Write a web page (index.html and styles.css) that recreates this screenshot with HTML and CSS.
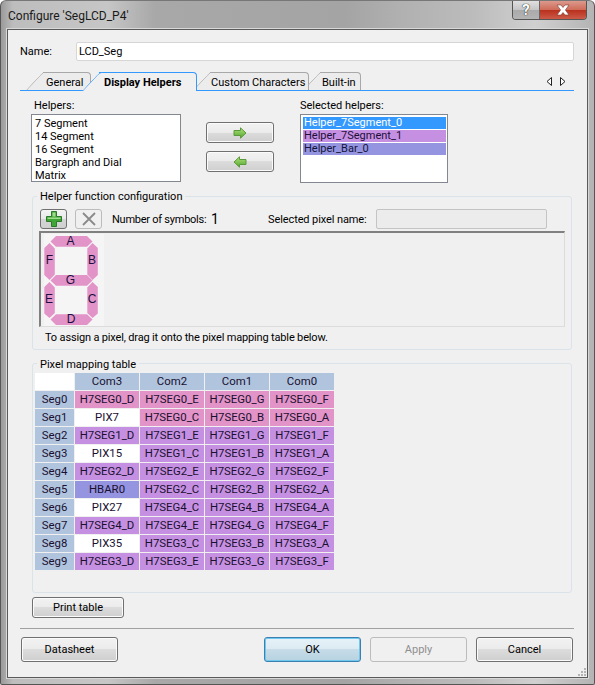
FILE: index.html
```html
<!DOCTYPE html>
<html>
<head>
<meta charset="UTF-8" />
<title>Configure 'SegLCD_P4'</title>
<link rel="stylesheet" href="styles.css">
</head>
<body>
<div class="window">
	<div class="titlebar">
		<span class="title">Configure 'SegLCD_P4'</span>
		<div class="caption">
			<div class="cap-help">?</div>
			<div class="cap-close">
				<svg width="18" height="12" viewBox="0 0 18 12"><path d="M3 1h4l2 2.5L11 1h4l-3.6 5L15 11h-4L9 8.5 7 11H3l3.6-5z" fill="#fff" stroke="#7a3a30" stroke-width=".6"/></svg>
			</div>
		</div>
	</div>
	<div class="panel">
		<div class="name-row">
			<label class="name-label">Name:</label>
			<div class="name-input">LCD_Seg</div>
		</div>

		<div class="tabs">
			<div class="tab tab-general">General</div>
			<div class="tab tab-active">Display Helpers</div>
			<div class="tab tab-custom">Custom Characters</div>
			<div class="tab tab-builtin">Built-in</div>
			<div class="tab-nav">
				<svg width="20" height="9" viewBox="0 0 20 9"><path d="M5.500 .5v8L1 4.500z M14.500 .5v8L19 4.500z" fill="#fff" stroke="#222"/></svg>
			</div>
		</div>

		<div class="helpers">
			<div class="helpers-col">
				<div class="list-label">Helpers:</div>
				<div class="listbox list-left">
					<div class="item">7 Segment</div>
					<div class="item">14 Segment</div>
					<div class="item">16 Segment</div>
					<div class="item">Bargraph and Dial</div>
					<div class="item">Matrix</div>
				</div>
			</div>
			<div class="move-btns">
				<div class="btn btn-move">
					<svg width="14" height="12" viewBox="0 0 14 12"><defs><linearGradient id="arrow" x1="0" y1="0" x2="0" y2="1"><stop offset="0" stop-color="#b4e27a"/><stop offset="1" stop-color="#4fa52f"/></linearGradient></defs><path d="M1 3.500h6.500V.8L13 6l-5.500 5.200V8.500H1z" fill="url(#arrow)" stroke="#5a9a3a"/></svg>
				</div>
				<div class="btn btn-move">
					<svg width="14" height="12" viewBox="0 0 14 12"><path d="M13 3.500H6.500V.8L1 6l5.500 5.200V8.500H13z" fill="url(#arrow)" stroke="#5a9a3a"/></svg>
				</div>
			</div>
			<div class="helpers-col">
				<div class="list-label">Selected helpers:</div>
				<div class="listbox list-right">
					<div class="sel sel-blue">Helper_7Segment_0</div>
					<div class="sel sel-purple">Helper_7Segment_1</div>
					<div class="sel sel-violet">Helper_Bar_0</div>
				</div>
			</div>
		</div>

		<fieldset class="group group-config">
			<legend>Helper function configuration</legend>
			<div class="toolbar">
				<div class="tool tool-add">
					<svg width="18" height="18" viewBox="0 0 18 18"><path d="M6.500 1.500h5v5h5v5h-5v5h-5v-5h-5v-5h5z" fill="#3fa535" stroke="#2b7a2b"/><path d="M7.500 2.500h3v4h-3z M2.500 7.500h13v1.500h-13z" fill="#9fdc8c"/></svg>
				</div>
				<div class="tool tool-del">
					<svg width="14" height="14" viewBox="0 0 14 14"><path d="M1 1l12 12M13 1L1 13" stroke="#8a8a8a" stroke-width="1.800" fill="none"/></svg>
				</div>
				<span class="sym-label">Number of symbols:</span>
				<span class="sym-count">1</span>
				<span class="pix-label">Selected pixel name:</span>
				<div class="pix-input"></div>
			</div>
			<div class="canvas">
				<svg class="seg" width="60" height="92" viewBox="44 234 60 92">
					<rect x="44" y="234" width="60" height="92" fill="#f5f5f5"/>
					<g fill="#e293c7">
						<polygon points="50.500,241.500 56,236 87,236 92.500,241.500 87,246.800 56,246.800"/>
						<polygon points="49.500,243 54.800,248.500 54.800,274.500 49.500,280 44.300,275 44.300,248"/>
						<polygon points="92.500,243 97.800,248 97.800,275 92.500,280 87.300,274.500 87.300,248.500"/>
						<polygon points="50.500,280.500 56,275 87,275 92.500,280.500 87,285.800 56,285.800"/>
						<polygon points="49.500,282 54.800,287.500 54.800,313 49.500,318 44.300,313.500 44.300,287"/>
						<polygon points="92.500,282 97.800,287 97.800,313.500 92.500,318 87.300,313 87.300,287.500"/>
						<polygon points="50.500,319.500 56,314.200 87,314.200 92.500,319.500 87,325 56,325"/>
					</g>
					<g class="seg-text" text-anchor="middle">
						<text x="70.500" y="245">A</text>
						<text x="49.500" y="264">F</text>
						<text x="92" y="264">B</text>
						<text x="70.500" y="284">G</text>
						<text x="49" y="303">E</text>
						<text x="92" y="303">C</text>
						<text x="71" y="323">D</text>
					</g>
				</svg>
			</div>
			<div class="hint">To assign a pixel, drag it onto the pixel mapping table below.</div>
		</fieldset>

		<fieldset class="group group-table">
			<legend>Pixel mapping table</legend>
			<div class="map">
				<div class="c blank"></div><div class="c hd">Com3</div><div class="c hd">Com2</div><div class="c hd">Com1</div><div class="c hd">Com0</div>
				<div class="c hd">Seg0</div><div class="c pk">H7SEG0_D</div><div class="c pk">H7SEG0_E</div><div class="c pk">H7SEG0_G</div><div class="c pk">H7SEG0_F</div>
				<div class="c hd">Seg1</div><div class="c wh">PIX7</div><div class="c pk">H7SEG0_C</div><div class="c pk">H7SEG0_B</div><div class="c pk">H7SEG0_A</div>
				<div class="c hd">Seg2</div><div class="c pu">H7SEG1_D</div><div class="c pu">H7SEG1_E</div><div class="c pu">H7SEG1_G</div><div class="c pu">H7SEG1_F</div>
				<div class="c hd">Seg3</div><div class="c wh">PIX15</div><div class="c pu">H7SEG1_C</div><div class="c pu">H7SEG1_B</div><div class="c pu">H7SEG1_A</div>
				<div class="c hd">Seg4</div><div class="c pu">H7SEG2_D</div><div class="c pu">H7SEG2_E</div><div class="c pu">H7SEG2_G</div><div class="c pu">H7SEG2_F</div>
				<div class="c hd">Seg5</div><div class="c vi">HBAR0</div><div class="c pu">H7SEG2_C</div><div class="c pu">H7SEG2_B</div><div class="c pu">H7SEG2_A</div>
				<div class="c hd">Seg6</div><div class="c wh">PIX27</div><div class="c pu">H7SEG4_C</div><div class="c pu">H7SEG4_B</div><div class="c pu">H7SEG4_A</div>
				<div class="c hd">Seg7</div><div class="c pu">H7SEG4_D</div><div class="c pu">H7SEG4_E</div><div class="c pu">H7SEG4_G</div><div class="c pu">H7SEG4_F</div>
				<div class="c hd">Seg8</div><div class="c wh">PIX35</div><div class="c pu">H7SEG3_C</div><div class="c pu">H7SEG3_B</div><div class="c pu">H7SEG3_A</div>
				<div class="c hd">Seg9</div><div class="c pu">H7SEG3_D</div><div class="c pu">H7SEG3_E</div><div class="c pu">H7SEG3_G</div><div class="c pu">H7SEG3_F</div>
			</div>
		</fieldset>

		<div class="btn btn-print">Print table</div>
		<div class="sep"></div>

		<div class="footer">
			<div class="btn btn-foot">Datasheet</div>
			<div class="footer-right">
				<div class="btn btn-foot btn-default">OK</div>
				<div class="btn btn-foot btn-disabled">Apply</div>
				<div class="btn btn-foot">Cancel</div>
			</div>
		</div>
		<svg class="grip" width="10" height="10" viewBox="0 0 10 10"><path d="M7 1h2v2H7zM4 4h2v2H4zM7 4h2v2H7zM1 7h2v2H1zM4 7h2v2H4zM7 7h2v2H7z" fill="#b4b4b4"/></svg>
	</div>
</div>
</body>
</html>
```

FILE: styles.css
```css
html,body{margin:0;padding:0;}
body{width:595px;height:685px;overflow:hidden;font-family:Roboto,"Liberation Sans",Arial,sans-serif;font-size:11px;color:#000;}
div{box-sizing:border-box;}

/* window frame */
.window{width:595px;height:685px;padding:0 6px 6px 6px;border:1px solid #555;border-top-color:#777;border-radius:6px 6px 2px 2px;background:linear-gradient(90deg,#9a9a9a 0,#bdbdbd 2%,#c6c6c6 18%,#a8a8a8 26%,#a4a4a4 58%,#b0b0b0 67%,#bcbcbc 80%,#d0d0d0 90%,#b4b4b4 100%);display:flex;flex-direction:column;margin:0;}
.titlebar{height:28px;flex:none;display:flex;justify-content:space-between;margin-left:-6px;margin-right:-5px;}
.title{padding:7px 0 0 7px;font-size:12px;line-height:16px;color:#1a1a1a;}
.caption{display:flex;height:19px;margin-right:6px;border:1px solid #555;border-top:0;border-radius:0 0 4px 4px;overflow:hidden;}
.cap-help{width:27px;background:linear-gradient(#e0e0e0,#c4c4c4 50%,#aaa 50%,#b4b4b4);color:#fff;font-size:15px;font-weight:bold;line-height:18px;text-align:center;text-shadow:0 0 1px #222,0 0 1px #222;border-right:1px solid #666;}
.cap-close{width:46px;background:linear-gradient(#dc9a8c,#cf6a58 50%,#b8301c 50%,#cc5a48);display:flex;align-items:center;justify-content:center;}

.panel{position:relative;flex:1;background:#f0f0f0;border:1px solid #5a5a5a;box-shadow:0 0 0 1px #d8d8d8;}

/* name */
.name-row{display:flex;align-items:center;margin:12px 13px 0 12px;height:19px;}
.name-label{width:56px;}
.name-input{width:499px;height:19px;line-height:17px;padding-left:2px;background:#fff;border:1px solid #d6d6d6;border-radius:2px;}

/* tabs */
.tabs{display:flex;height:19px;margin:11px 13px 0 12px;border-bottom:1px solid #3399ff;position:relative;z-index:0;}
.tab{position:relative;height:18px;line-height:19px;white-space:nowrap;border:1px solid #a8a8a8;border-left:0;border-bottom:0;border-radius:0 4px 0 0;background:#ececec;}
.tab::before{content:"";position:absolute;left:-17px;top:-1px;bottom:0;width:17px;border-left:1px solid #a8a8a8;border-top:1px solid #a8a8a8;background:inherit;transform:skewX(-43deg);transform-origin:bottom left;border-radius:3px 0 0 0;z-index:-1;}
.tab-general{width:48px;margin-left:23px;padding-left:3px;}
.tab-active{width:98px;margin-left:8px;height:19px;padding-left:5px;font-weight:bold;background:#f0f0f0;border-color:#3399ff;z-index:2;}
.tab-active::before{border-color:#3399ff;}
.tab-custom{width:99px;margin-left:13px;padding-left:1px;}
.tab-builtin{width:41px;margin-left:11px;padding-left:2px;}
.tab-nav{margin-left:auto;margin-right:8px;padding-top:4px;}

/* helper lists */
.helpers{display:flex;height:86px;margin:7px 0 0 23px;}
.list-label{height:16px;line-height:16px;padding-left:3px;}
.listbox{background:#fff;border:1px solid #828790;}
.list-left{width:150px;height:68px;padding:2px 0 0 3px;}
.list-left .item{height:13px;line-height:13px;}
.list-right{width:148px;height:69px;padding:2px 1px 0 2px;}
.sel{height:12px;line-height:12px;margin-bottom:1px;padding-left:1px;}
.sel-blue{background:#3399ff;color:#fff;}
.sel-purple{background:#c690e2;color:#1c0f3a;}
.sel-violet{background:#9494e0;color:#14143c;}
.move-btns{width:68px;margin:24px 26px 0 25px;display:flex;flex-direction:column;gap:8px;}
.helpers-col:last-child .list-label{padding-left:0;}

/* buttons */
.btn{display:flex;align-items:center;justify-content:center;border:1px solid #707070;border-radius:3px;background:linear-gradient(#f2f2f2,#ebebeb 50%,#dcdcdc 50%,#cfcfcf);box-shadow:inset 0 0 0 1px #fbfbfb;}
.btn-move{height:21px;}
.btn-print{width:92px;height:21px;margin:4px 0 0 24px;}
.btn-foot{width:97px;height:25px;}
.btn-default{border-color:#3c7fb1;background:linear-gradient(#e6f2f8,#dceaf2 50%,#c6dce8 50%,#b8d2e0);box-shadow:inset 0 0 0 1px #6fc8ee;}
.btn-disabled{border-color:#bcbcbc;background:#f0f0f0;color:#8f8f8f;box-shadow:none;}
.footer{display:flex;justify-content:space-between;margin:8px 14px 0 13px;}
.footer-right{display:flex;gap:9px;}
.sep{height:1px;background:#a0a0a0;margin:10px 13px 0 12px;}
.grip{position:absolute;right:0;bottom:0;}

/* groups */
.group{box-sizing:border-box;margin:0 0 0 24px;width:540px;min-width:0;border:1px solid #dbe3ea;border-radius:3px;padding:0 6px;}
.group legend{padding:0 3px;height:14px;}
.group-config{height:161px;margin-top:5px;}
.group-config legend{margin-left:-2px;line-height:16px;}
.group-table{height:237px;margin-top:6px;padding:3px 0 0 2px;}
.group-table legend{margin-left:2px;line-height:18px;}

.toolbar{display:flex;align-items:center;height:20px;margin:6px 0 2px 1px;white-space:nowrap;}
.tool{flex:none;width:27px;height:20px;border:1px solid #707070;border-radius:3px;display:flex;align-items:center;justify-content:center;background:linear-gradient(#f4f4f4,#e8e8e8 50%,#d4d4d4 50%,#d0d0d0);}
.tool-del{margin-left:8px;border-color:#bcbcbc;background:#f0f0f0;}
.sym-label{flex:none;margin-left:10px;width:99px;letter-spacing:-.25px;}
.sym-count{flex:none;width:57px;font-size:14px;}
.pix-label{flex:none;width:108px;letter-spacing:-.1px;}
.pix-input{flex:none;width:171px;height:20px;border:1px solid #c4c4c4;border-radius:2px;background:#ececec;}

.canvas{height:96px;background:#f0f0f0;border:1px solid #dcdcdc;border-left:2px solid #808080;border-top:2px solid #808080;padding:1px 0 0 3px;}
.seg{display:block;}
.seg-text text{font-family:"Liberation Sans",Arial,sans-serif;font-size:12px;fill:#1a1040;}
.hint{padding:4px 0 0 6px;height:16px;line-height:14px;letter-spacing:-.16px;}

/* mapping table */
.map{display:grid;grid-template-columns:39px 64px 64px 64px 64px;grid-auto-rows:17px;gap:1px;}
.map .c{text-align:center;line-height:17px;font-size:11.400px;color:#1a1030;white-space:nowrap;}
.blank,.wh{background:#fff;}
.hd{background:#b0c4de;}
.pk{background:#e293c7;}
.pu{background:#c690e2;}
.vi{background:#9494e0;}
```
